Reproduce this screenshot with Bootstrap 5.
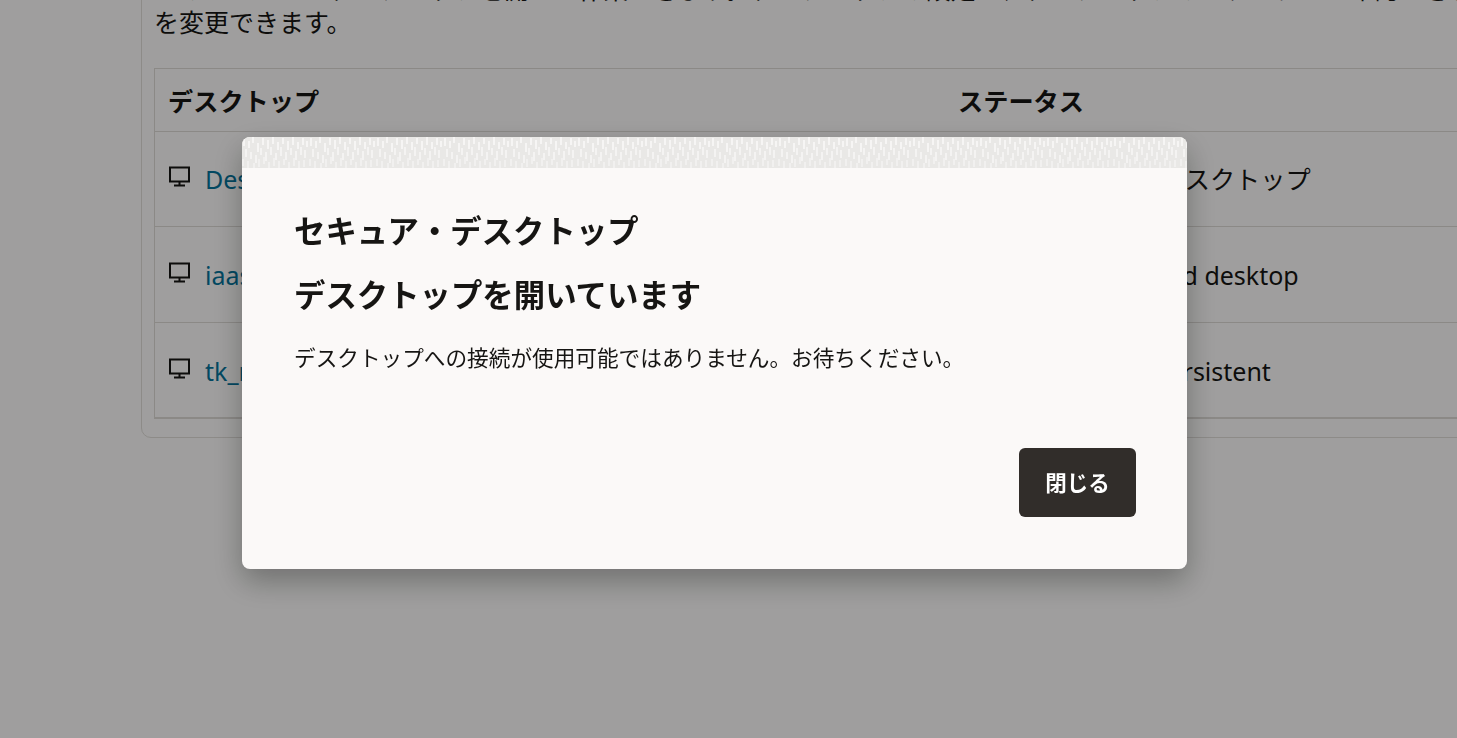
<!DOCTYPE html>
<html lang="ja">
<head>
<meta charset="utf-8">
<title>セキュア・デスクトップ</title>
<link href="https://cdn.jsdelivr.net/npm/bootstrap@5.3.0/dist/css/bootstrap.min.css" rel="stylesheet">
<style>
html,body{height:738px;overflow:hidden;background:#fcfbfa;}
body{font-family:"Noto Sans","Noto Sans CJK JP",sans-serif;color:#161513;}
.stage{height:738px;overflow:hidden;}
.panel-box{margin:-28px 0 0 141px;width:1500px;height:466px;border:1px solid #dfdcd8;border-radius:10px;padding:0 12px;background:#fcfbfa;}
.lead-text{font-size:25px;line-height:33px;margin:0 0 29px 0;white-space:nowrap;}
.desk-table{width:1400px;border:1px solid #dcd9d5;border-bottom-width:2px;}
.desk-head{height:62px;padding-top:4px;font-weight:700;font-size:25.2px;}
.desk-row{height:95.500px;font-size:25px;border-top:1px solid #dcd9d5;}
.desk-row.row-first{height:95px;}
.cell-a{width:792px;padding-left:13px;}
.cell-b{padding-left:11px;}
.status-ja{font-size:25.2px;}
.desk-row .cell-a,.desk-row .cell-b{padding-top:29px;}
.desk-row.row-low .cell-a,.desk-row.row-low .cell-b{padding-top:30px;}
.desk-glyph{margin-top:5px;flex:none;}
.row-low .desk-glyph{margin-top:5px;}
.desk-link{color:#04739a;text-decoration:none;margin-left:14px;}
.scrim{position:fixed;inset:0;background:#000;opacity:.37;}
.dialog-box{position:fixed;left:242px;top:137px;width:945px;height:432px;background:#fbf9f8;border-radius:8px;box-shadow:0 12px 30px rgba(0,0,0,.3);overflow:hidden;}
.dialog-band{display:block;width:945px;height:31px;}
.dialog-body{padding:0 51px 52px 52px;height:401px;}
.dialog-title{font-size:31.4px;font-weight:700;line-height:44px;margin:0;font-family:"Noto Sans CJK JP",sans-serif;}
.title-one{margin-top:40px;}
.title-two{margin-top:20px;}
.dialog-msg{font-size:21.65px;line-height:32px;margin:25px 0 0;font-family:"Noto Sans CJK JP",sans-serif;}
.close-btn{width:117px;height:69px;background:#312d2a;border:0;border-radius:6px;color:#fff;font-size:21.5px;font-weight:700;font-family:"Noto Sans CJK JP",sans-serif;}
.close-btn:hover{background:#312d2a;color:#fff;}
</style>
</head>
<body>
<div class="stage">
  <div class="panel-box">
    <p class="lead-text">このリストからデスクトップを開いて作業できます。デスクトップの設定で、デスクトップのステータスが確認できます<br>を変更できます。</p>
    <div class="desk-table">
      <div class="d-flex align-items-center desk-head">
        <div class="cell-a">デスクトップ</div>
        <div class="cell-b">ステータス</div>
      </div>
      <div class="d-flex desk-row row-first">
        <div class="cell-a d-flex align-items-start">
          <svg class="desk-glyph" width="23" height="21" viewBox="0 0 23 21" fill="none" stroke="#161513" stroke-width="2"><rect x="2" y="1.5" width="19" height="14"/><path d="M11.5 15.500v4M6 19.500h11"/></svg>
          <a class="desk-link" href="#">Desktop</a>
        </div>
        <div class="cell-b status-ja">個人用永続の専用デスクトップ</div>
      </div>
      <div class="d-flex desk-row row-low">
        <div class="cell-a d-flex align-items-start">
          <svg class="desk-glyph" width="23" height="21" viewBox="0 0 23 21" fill="none" stroke="#161513" stroke-width="2"><rect x="2" y="1.5" width="19" height="14"/><path d="M11.5 15.500v4M6 19.500h11"/></svg>
          <a class="desk-link" href="#">iaas_desktop</a>
        </div>
        <div class="cell-b">Persistent dedicated desktop</div>
      </div>
      <div class="d-flex desk-row row-low">
        <div class="cell-a d-flex align-items-start">
          <svg class="desk-glyph" width="23" height="21" viewBox="0 0 23 21" fill="none" stroke="#161513" stroke-width="2"><rect x="2" y="1.5" width="19" height="14"/><path d="M11.5 15.500v4M6 19.500h11"/></svg>
          <a class="desk-link" href="#">tk_nonpersistent</a>
        </div>
        <div class="cell-b">Dedicated / non-persistent</div>
      </div>
    </div>
  </div>
</div>
<div class="scrim"></div>
<div class="dialog-box" role="dialog">
  <svg class="dialog-band" viewBox="0 0 945 31" preserveAspectRatio="none">
    <defs>
      <filter id="soft" x="0" y="0" width="100%" height="100%"><feGaussianBlur stdDeviation="0.6"/></filter>
      <pattern id="ticks" width="67" height="31" patternUnits="userSpaceOnUse">
        <rect width="67" height="31" fill="#e9e8e6"/>
        <path d="M2 1v8M7 4v7M11 0v6M16 6v9M21 1v7M26 3v9M31 0v7M36 5v8M41 1v6M46 4v9M51 0v8M56 5v7M61 1v7M65 4v6" stroke="#f6f5f4" stroke-width="2.1"/>
        <path d="M4 12v8M9 15v7M14 18v8M19 11v7M24 15v9M29 10v8M34 16v7M39 10v9M44 15v8M49 11v7M54 14v9M59 10v8M63 13v8" stroke="#f4f3f2" stroke-width="2.1"/>
        <path d="M1 22v7M6 24v7M12 26v5M17 22v8M22 20v7M27 25v6M32 21v8M37 24v7M42 22v6M47 25v6M52 21v8M57 24v7M62 23v7" stroke="#f1f0ef" stroke-width="2"/>
      </pattern>
    </defs>
    <rect width="945" height="31" fill="url(#ticks)" filter="url(#soft)"/>
  </svg>
  <div class="dialog-body d-flex flex-column">
    <h1 class="dialog-title title-one">セキュア・デスクトップ</h1>
    <h2 class="dialog-title title-two">デスクトップを開いています</h2>
    <p class="dialog-msg">デスクトップへの接続が使用可能ではありません。お待ちください。</p>
    <div class="d-flex justify-content-end mt-auto">
      <button type="button" class="btn close-btn">閉じる</button>
    </div>
  </div>
</div>
<script src="https://cdn.jsdelivr.net/npm/bootstrap@5.3.0/dist/js/bootstrap.bundle.min.js"></script>
</body>
</html>
